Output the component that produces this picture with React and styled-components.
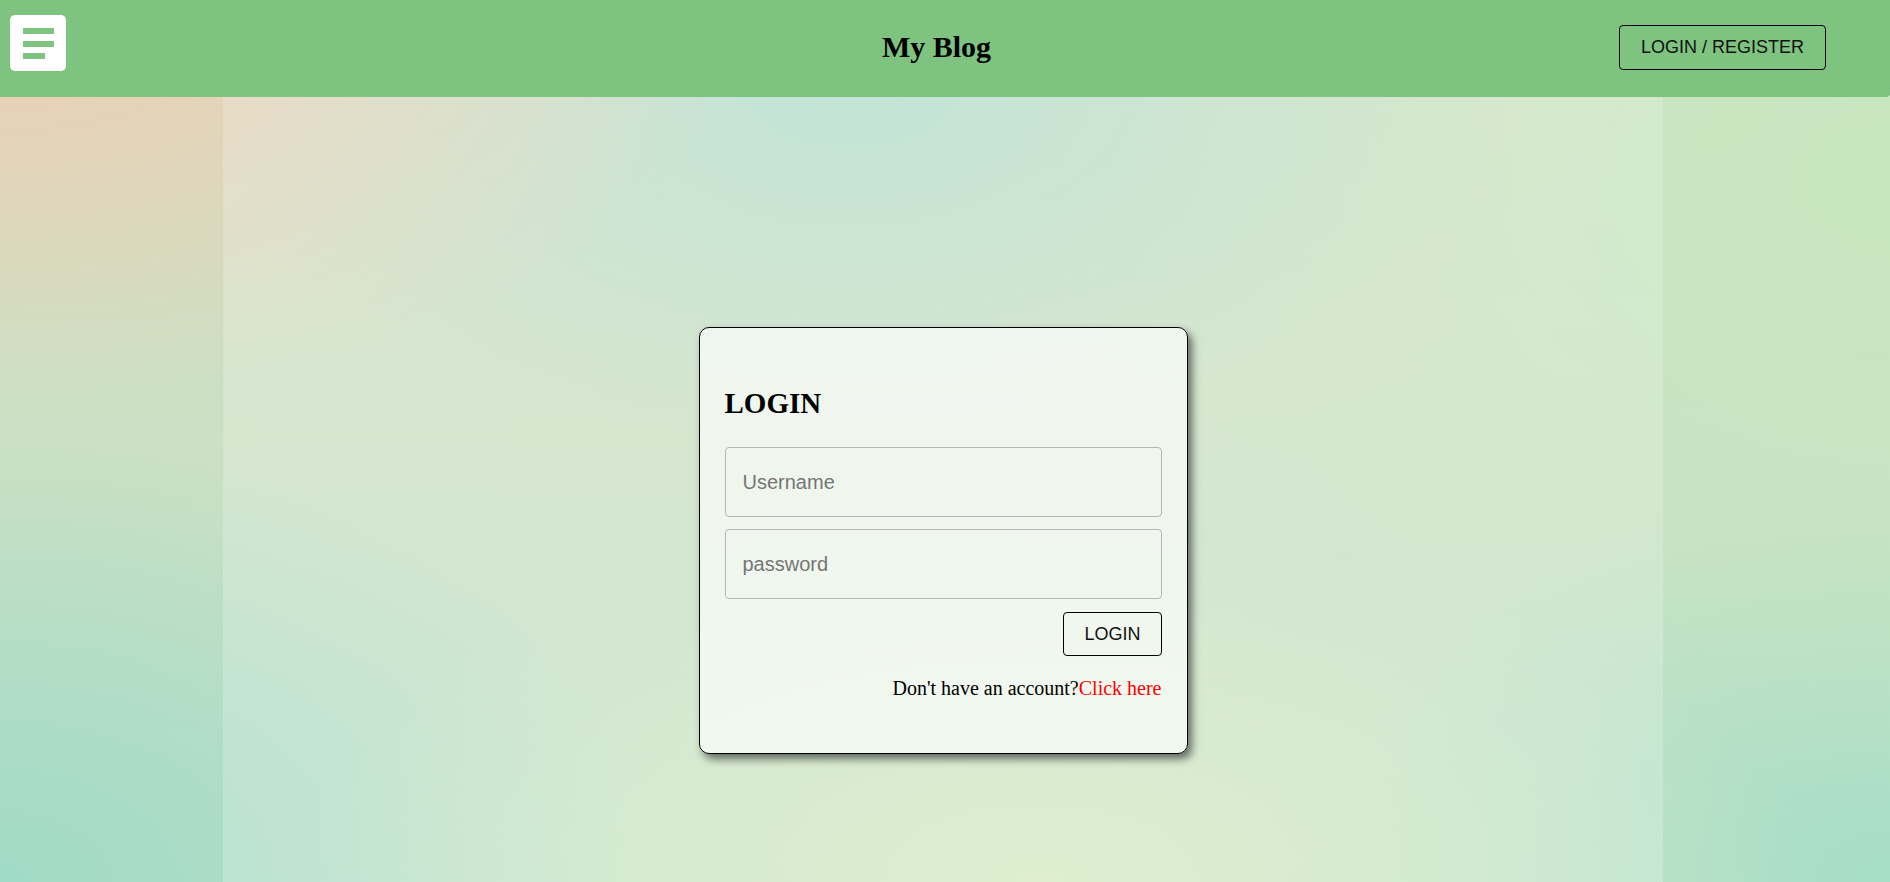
import * as React from 'react';
import styled, { createGlobalStyle } from 'styled-components';

const GlobalStyle = createGlobalStyle`
  * { box-sizing: border-box; }
  body {
    margin: 0;
    font-family: "Liberation Serif", "Times New Roman", serif;
    color: #000;
  }
`;

const Page = styled.div`
  min-height: 100vh;
  background-color: #c6e3c8;
  background-image:
    radial-gradient(ellipse 40% 45% at 0% 0%, rgba(238, 205, 180, 1), rgba(238, 205, 180, 0)),
    radial-gradient(ellipse 35% 40% at 45% 10%, rgba(176, 222, 206, 0.9), rgba(176, 222, 206, 0)),
    radial-gradient(ellipse 45% 70% at 100% 20%, rgba(198, 231, 192, 1), rgba(198, 231, 192, 0)),
    radial-gradient(ellipse 40% 40% at 55% 100%, rgba(214, 234, 196, 1), rgba(214, 234, 196, 0)),
    radial-gradient(ellipse 35% 50% at 0% 100%, rgba(160, 218, 198, 1), rgba(160, 218, 198, 0)),
    radial-gradient(ellipse 30% 45% at 100% 100%, rgba(166, 222, 198, 1), rgba(166, 222, 198, 0)),
    linear-gradient(180deg, #d4dec0 0%, #c2e2c8 100%);
  background-attachment: fixed;
`;

const Header = styled.header`
  height: 97px;
  background: #7ec480;
  display: grid;
  grid-template-columns: 1fr auto 1fr;
  align-items: center;
  padding: 0 10px;
  border-bottom-right-radius: 4px;
`;

const MenuButton = styled.button`
  align-self: start;
  justify-self: start;
  margin-top: 15px;
  width: 56px;
  height: 56px;
  border: none;
  border-radius: 5px;
  background: #fff;
  padding: 13px 0 0 13px;
  display: flex;
  flex-direction: column;
  gap: 6.5px;
  cursor: pointer;
`;

const Bar = styled.span`
  display: block;
  height: 6px;
  width: ${p => p.$w}px;
  background: #7ec480;
`;

const Title = styled.h1`
  margin: -4px 17px 0 0;
  font-size: 30px;
  font-weight: bold;
  font-family: "Liberation Serif", "Times New Roman", serif;
`;

const OutlineButton = styled.button`
  font-family: "Liberation Sans", Arial, sans-serif;
  font-size: ${p => p.$size || 18}px;
  color: #111;
  background: transparent;
  border: 1px solid #000;
  border-radius: 4px;
  height: ${p => p.$h || 45}px;
  padding: 0 ${p => p.$px || 21}px;
  cursor: pointer;
`;

const HeaderRight = styled.div`
  justify-self: end;
  margin-right: 54px;
  margin-top: -3px;
`;

const Main = styled.main`
  width: 1440px;
  margin: 0 auto;
  min-height: 100vh;
  padding-top: 5px;
  background: rgba(255, 255, 255, 0.2);
  display: flex;
  align-items: center;
  justify-content: center;
  transform: translateX(-2px);
`;

const Card = styled.form`
  width: 489px;
  padding: 59px 25px 54px;
  border: 1px solid #000;
  border-radius: 10px;
  background: rgba(255, 255, 255, 0.65);
  box-shadow: 4px 5px 8px rgba(0, 0, 0, 0.55);
  display: flex;
  flex-direction: column;
`;

const CardTitle = styled.h2`
  margin: 0 0 27px;
  font-size: 29px;
  font-weight: bold;
`;

const Input = styled.input`
  width: 100%;
  height: 70px;
  margin-bottom: ${p => p.$mb || 12}px;
  padding: 0 17px;
  font-family: "Liberation Sans", Arial, sans-serif;
  font-size: 20px;
  background: transparent;
  border: 1px solid #b4b8b4;
  border-radius: 4px;
  outline: none;
  &::placeholder { color: #757575; }
`;

const Actions = styled.div`
  display: flex;
  justify-content: flex-end;
  margin-bottom: 21px;
`;

const Footnote = styled.p`
  margin: 0;
  text-align: right;
  font-size: 20px;
  line-height: 22px;
`;

const Link = styled.a`
  color: #f00;
  text-decoration: none;
`;

export default function App() {
  return (
    <Page>
      <GlobalStyle />
      <Header>
        <MenuButton aria-label="menu">
          <Bar $w={31} />
          <Bar $w={31} />
          <Bar $w={22} />
        </MenuButton>
        <Title>My Blog</Title>
        <HeaderRight>
          <OutlineButton>LOGIN / REGISTER</OutlineButton>
        </HeaderRight>
      </Header>
      <Main>
        <Card onSubmit={e => e.preventDefault()}>
          <CardTitle>LOGIN</CardTitle>
          <Input placeholder="Username" />
          <Input type="password" placeholder="password" $mb={13} />
          <Actions>
            <OutlineButton $h={44} $px={20}>LOGIN</OutlineButton>
          </Actions>
          <Footnote>
            Don't have an account?<Link href="#">Click here</Link>
          </Footnote>
        </Card>
      </Main>
    </Page>
  );
}
